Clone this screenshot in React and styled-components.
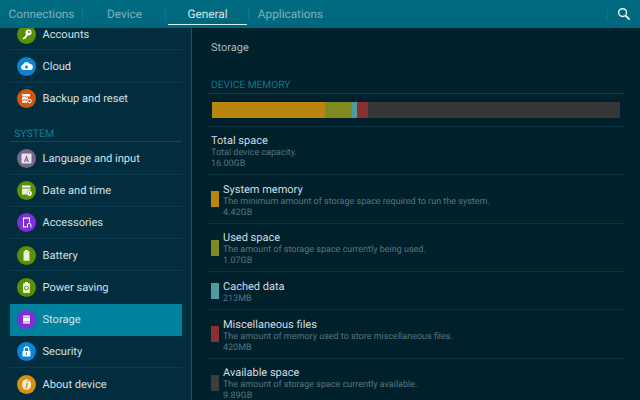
import React from "react";
import styled, { createGlobalStyle } from "styled-components";

const Global = createGlobalStyle`
  html, body { margin: 0; padding: 0; background: #00202c; }
  body { font-family: Roboto, "Liberation Sans", sans-serif; text-rendering: geometricPrecision; }
  #root { width: 640px; height: 400px; overflow: hidden; }
`;

const Page = styled.div`
  width: 640px; height: 400px; display: flex; flex-direction: column; overflow: hidden; background: #00202c;
`;
const TopBar = styled.header`
  flex: 0 0 28px; height: 28px; display: flex; align-items: stretch; position: relative; z-index: 2;
  background: linear-gradient(#006c82, #00677d);
`;
const Tab = styled.div`
  width: 83px; box-sizing: border-box; display: flex; align-items: center; justify-content: center; position: relative;
  font-size: 11.8px;
  color: ${p => (p.$active ? "#d6e6ea" : "#7fb0bc")};
  &::after {
    content: ""; position: absolute; right: 0; top: 8px; height: 12px; width: 1px;
    background: ${p => (p.$last ? "transparent" : "#0f7689")};
  }
`;
const Underline = styled.span`
  position: absolute; left: 2px; right: 2px; bottom: 3px; height: 1.5px; background: #d8ecef;
`;
const SearchBox = styled.div`
  margin-left: auto; width: 33px; position: relative; display: flex; align-items: center; justify-content: center;
  &::before {
    content: ""; position: absolute; left: 0; top: 8px; height: 12px; width: 1px; background: #0f7284;
  }
`;
const Body = styled.div`
  flex: 1; display: flex; min-height: 0;
`;
const Sidebar = styled.aside`
  width: 191px; flex: 0 0 191px; background: #012d3e; border-right: 1px solid #24505f; overflow: hidden; box-sizing: content-box;
`;
const SideList = styled.div`
  margin-top: -10px; padding: 0 9px 0 10px;
`;
const SideRow = styled.div`
  height: 32.25px; box-sizing: border-box; display: flex; align-items: center; gap: 7px; padding-left: 6.5px;
  color: #d5e2e6; font-size: 11.1px;
  background: ${p => (p.$active ? "#00829f" : "transparent")};
  box-shadow: inset 0 -1px 0 ${p => (p.$plain ? "transparent" : "#0b3b4c")};
`;
const Circle = styled.span`
  width: 19px; height: 19px; border-radius: 50%; flex: none; display: flex; align-items: center; justify-content: center;
  background: ${p => p.$c};
`;
const SectionLabel = styled.div`
  height: 20.5px; margin-top: 7px; box-sizing: border-box; padding: 5px 0 0 4px; font-size: 10.5px;
  color: #0f7f97; border-bottom: 1px solid #124a5b;
`;
const Main = styled.main`
  flex: 1; min-width: 0; padding: 0 15px 0 15px; overflow: hidden;
`;
const Title = styled.div`
  margin: 13px 0 0 4px; height: 13px; line-height: 13px; font-size: 11px; color: #a9b8bd;
`;
const SectionHead = styled.div`
  margin-top: 25px; height: 15px; line-height: 14px; box-sizing: border-box; padding-left: 4px; font-size: 10.2px;
  color: #0f7687; border-bottom: 1px solid #0f3e4d;
`;
const Bar = styled.div`
  display: flex; height: 16px; margin: 7.5px 5px 0 5px;
`;
const Seg = styled.span`
  display: block; background: ${p => p.$c}; flex: 0 0 ${p => p.$w}px;
`;
const Rows = styled.div`
  margin-top: 8px;
`;
const InfoRow = styled.div`
  height: ${p => p.$h}px; box-sizing: border-box; border-top: 1px solid #0a3240; display: flex; align-items: center; padding-left: 4px; gap: 4px;
`;
const Swatch = styled.span`
  width: 8px; height: 16px; flex: none; margin-top: 1px; background: ${p => p.$c};
`;
const InfoText = styled.div`
  display: flex; flex-direction: column; padding-top: 3px;
`;
const InfoTitle = styled.div`
  font-size: 11px; line-height: 15px; color: #d3dde0;
`;
const InfoSub = styled.div`
  font-size: 9px; line-height: 11px; color: #567680;
`;

const Ic = ({ children }) => (
  <svg width="13" height="13" viewBox="0 0 13 13" fill="#fff">{children}</svg>
);
const icons = {
  key: <Ic><circle cx="8.5" cy="4.5" r="3" /><path d="M7 6L2.5 10.5l1 1 1-1 1 .5.5-1 1.5-2.5z" /><circle cx="9" cy="4" r="1" fill="#5a9100" /></Ic>,
  cloud: <Ic><path d="M3.5 10a2.8 2.8 0 0 1-.4-5.5A3.6 3.6 0 0 1 9.8 4a3 3 0 0 1 0 6z" /><circle cx="6.5" cy="7" r="1.5" fill="#0a84d8" /></Ic>,
  backup: <Ic><rect x="2" y="2" width="8" height="2.4" rx=".6" /><rect x="2" y="5.2" width="6" height="2.4" rx=".6" /><rect x="2" y="8.4" width="5" height="2.4" rx=".6" /><circle cx="9.5" cy="9" r="1.8" fill="none" stroke="#fff" /></Ic>,
  lang: <Ic><rect x="1.5" y="1.5" width="10" height="10" rx="1" fill="#e6e1ea" /><path d="M6.5 3L4 10h1.4l.4-1.4h1.4L7.6 10H9zM6 7.5l.5-1.7.5 1.7z" fill="#75668a" /></Ic>,
  date: <Ic><rect x="2" y="1.5" width="8.5" height="2" /><path d="M2 4.5h8.5v2.2A3 3 0 0 0 7 10.5H2z" opacity=".85" /><circle cx="9.5" cy="9.5" r="2.4" /><path d="M9.5 8.2v1.4h1" stroke="#5a9100" fill="none" strokeWidth=".8" /></Ic>,
  acc: <Ic><path d="M3 1.5h7v4.7H9V2.7H4v7.6h2.5v1.2H3z" /><path d="M7.5 11.5V9a1.7 1.7 0 0 1 3.4 0v2.5" fill="none" stroke="#fff" strokeWidth="1" /></Ic>,
  batt: <Ic><rect x="5" y="1" width="3" height="1.5" /><rect x="3.5" y="2.3" width="6" height="9.5" rx=".6" fill="#e8f0d8" /></Ic>,
  power: <Ic><rect x="5" y="1" width="3" height="1.5" /><rect x="3.2" y="2.3" width="6.6" height="9.5" rx=".6" /><circle cx="6.5" cy="7" r="2" fill="none" stroke="#5a9100" strokeWidth="1" /></Ic>,
  storage: <Ic><path d="M3 2.5h7v8H3z" /><path d="M3 4.2h7M3 8.8h7" stroke="#7e2fd8" strokeWidth=".6" /></Ic>,
  lock: <Ic><path d="M4.2 6V4.2a2.3 2.3 0 0 1 4.6 0V6" fill="none" stroke="#fff" strokeWidth="1.3" /><rect x="2.5" y="6" width="8" height="5.5" rx=".6" /><rect x="6" y="7.5" width="1" height="2.4" fill="#0a84d8" /></Ic>,
  info: <Ic><ellipse cx="6.5" cy="6.5" rx="4.6" ry="5.2" fill="#f8eed8" /><path d="M7.2 2.6h1.4L8.2 4H6.8z" fill="#d9920f" /><path d="M6.5 4.9h1.5L6.9 10.4H5.4z" fill="#d9920f" /></Ic>,
};

const Row = ({ c, icon, label, active, plain }) => (
  <SideRow $active={active} $plain={plain}>
    <Circle $c={c}>{icons[icon]}</Circle>
    <span>{label}</span>
  </SideRow>
);

const Info = ({ h, swatch, title, sub, value }) => (
  <InfoRow $h={h}>
    {swatch && <Swatch $c={swatch} />}
    <InfoText>
      <InfoTitle>{title}</InfoTitle>
      {sub && <InfoSub>{sub}</InfoSub>}
      <InfoSub>{value}</InfoSub>
    </InfoText>
  </InfoRow>
);

export default function App() {
  return (
    <Page>
      <Global />
      <TopBar>
        <Tab>Connections</Tab>
        <Tab>Device</Tab>
        <Tab $active>General<Underline /></Tab>
        <Tab $last>Applications</Tab>
        <SearchBox>
          <svg width="14" height="14" viewBox="0 0 15 15" fill="none" stroke="#f2f8f9" strokeWidth="1.5">
            <circle cx="6" cy="6" r="4.2" />
            <path d="M9.2 9.2l4.3 4.3" strokeWidth="2" />
          </svg>
        </SearchBox>
      </TopBar>
      <Body>
        <Sidebar>
          <SideList>
            <Row c="#5a9100" icon="key" label="Accounts" />
            <Row c="#0a84d8" icon="cloud" label="Cloud" />
            <Row c="#d4570e" icon="backup" label="Backup and reset" plain />
            <SectionLabel>SYSTEM</SectionLabel>
            <Row c="#75668a" icon="lang" label="Language and input" />
            <Row c="#5a9100" icon="date" label="Date and time" />
            <Row c="#7e2fd8" icon="acc" label="Accessories" />
            <Row c="#5a9100" icon="batt" label="Battery" />
            <Row c="#5a9100" icon="power" label="Power saving" plain />
            <Row c="#7e2fd8" icon="storage" label="Storage" active plain />
            <Row c="#0a84d8" icon="lock" label="Security" />
            <Row c="#d9920f" icon="info" label="About device" plain />
          </SideList>
        </Sidebar>
        <Main>
          <Title>Storage</Title>
          <SectionHead>DEVICE MEMORY</SectionHead>
          <Bar>
            <Seg $c="#b8860f" $w={113} />
            <Seg $c="#7f8a1f" $w={27} />
            <Seg $c="#4f9da0" $w={5} />
            <Seg $c="#8a3030" $w={11} />
            <Seg $c="#363636" $w={252} />
          </Bar>
          <Rows>
            <Info h={48} title="Total space" sub="Total device capacity." value="16.00GB" />
            <Info h={49} swatch="#b8860f" title="System memory" sub="The minimum amount of storage space required to run the system." value="4.42GB" />
            <Info h={48} swatch="#7f8a1f" title="Used space" sub="The amount of storage space currently being used." value="1.07GB" />
            <Info h={38} swatch="#4f9da0" title="Cached data" value="213MB" />
            <Info h={49} swatch="#8a3030" title="Miscellaneous files" sub="The amount of memory used to store miscellaneous files." value="420MB" />
            <Info h={48} swatch="#3d3d3d" title="Available space" sub="The amount of storage space currently available." value="9.89GB" />
          </Rows>
        </Main>
      </Body>
    </Page>
  );
}
